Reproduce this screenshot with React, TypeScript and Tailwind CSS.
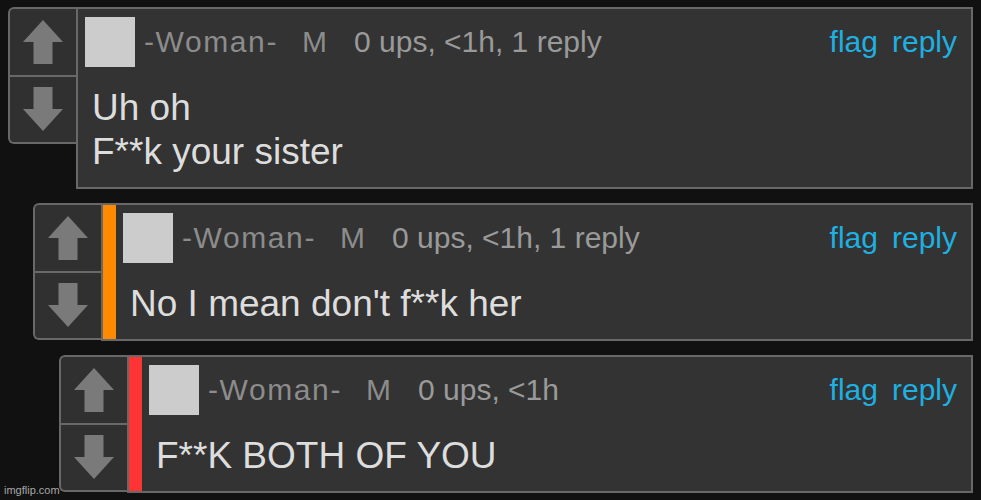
type Comment = {
  indent: string;
  bar?: string;
  lines: string[];
  meta: string;
};

const comments: Comment[] = [
  { indent: 'pl-[8px] pt-[7px]', lines: ['Uh oh', 'F**k your sister'], meta: '0 ups, <1h, 1 reply' },
  { indent: 'pl-[33px] mt-[14px]', bar: 'bg-[#ff8a00]', lines: ["No I mean don't f**k her"], meta: '0 ups, <1h, 1 reply' },
  { indent: 'pl-[59px] mt-[14px]', bar: 'bg-[#ff3535]', lines: ['F**K BOTH OF YOU'], meta: '0 ups, <1h' },
];

const Arrow = ({ down = false }: { down?: boolean }) => (
  <svg width="40" height="44" viewBox="0 0 40 44" className={down ? 'rotate-180' : ''}>
    <polygon points="20,0 40,22 29.5,22 29.5,44 10.5,44 10.5,22 0,22" fill="#7a7a7a" />
  </svg>
);

const VoteBox = () => (
  <div className="flex h-[137px] w-[68px] shrink-0 flex-col rounded-l-[6px] border-2 border-r-0 border-[#686868] bg-[#303030]">
    <div className="flex flex-1 items-center justify-center border-b-2 border-[#686868]">
      <Arrow />
    </div>
    <div className="flex flex-1 items-center justify-center">
      <Arrow down />
    </div>
  </div>
);

const CommentRow = ({ c }: { c: Comment }) => (
  <div className={`flex items-start pr-[8px] ${c.indent}`}>
    <VoteBox />
    <div className="flex min-h-[137px] flex-1 border-2 border-[#686868] bg-[#333333]">
      {c.bar && <div className={`w-[13px] shrink-0 ${c.bar}`} />}
      <div className="flex-1 pb-[13px] pl-[7px] pr-[14px] pt-[8px]">
        <div className="flex items-center text-[30px] leading-none">
          <div className="h-[50px] w-[50px] bg-[#cccccc]" />
          <span className="ml-[9px] tracking-[1.6px] text-[#8c8c8c]">-Woman-</span>
          <span className="ml-[24px] text-[#8c8c8c]">M</span>
          <span className="ml-[27px] text-[#9a9a9a]">{c.meta}</span>
          <span className="ml-auto text-[#1eb0e0]">flag</span>
          <span className="ml-[14px] text-[#1eb0e0]">reply</span>
        </div>
        <div className="mt-[19px] pl-[7px] text-[37px] leading-[44px] text-[#dddddd]">
          {c.lines.map((l) => (
            <div key={l}>{l}</div>
          ))}
        </div>
      </div>
    </div>
  </div>
);

export default function App() {
  return (
    <div
      className="relative h-[500px] w-[981px] overflow-hidden bg-[#111111]"
      style={{ fontFamily: '"Liberation Sans", Arial, sans-serif' }}
    >
      {comments.map((c, i) => (
        <CommentRow key={i} c={c} />
      ))}
      <div className="absolute bottom-[4px] left-[4px] text-[11px] leading-none text-[#a8a8a8]">imgflip.com</div>
    </div>
  );
}
